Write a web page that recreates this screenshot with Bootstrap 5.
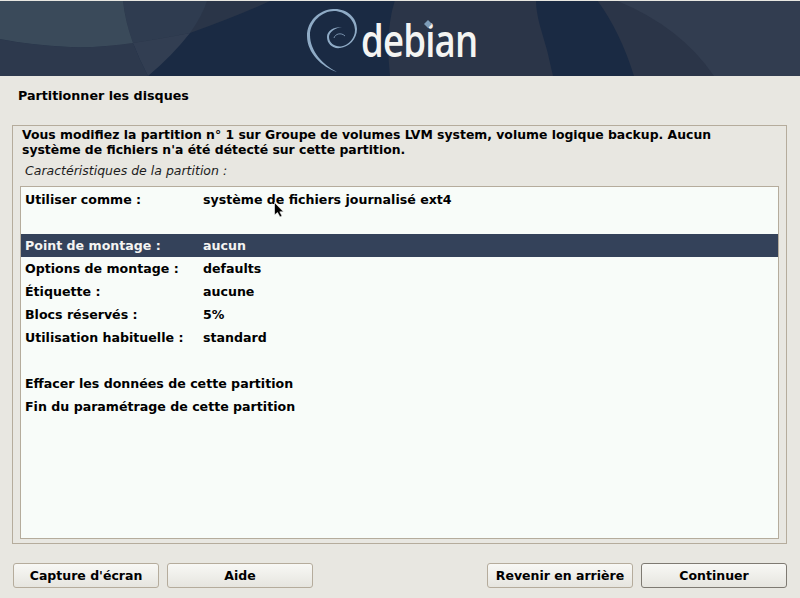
<!DOCTYPE html>
<html lang="fr"><head><meta charset="utf-8"><title>Partitionner les disques</title>
<link href="https://cdn.jsdelivr.net/npm/bootstrap@5.3.0/dist/css/bootstrap.min.css" rel="stylesheet">
<style>
html,body{height:100%}
body{margin:0;background:#e8e7e1;color:#000;font:bold 12.6px/15px "DejaVu Sans",sans-serif;overflow:hidden;width:800px;height:598px}
.di-head{height:75px;margin-top:1px;background:#1a2a43;position:relative;overflow:hidden}
.di-art{position:absolute;inset:0;width:800px;height:75px}
.di-word{position:absolute;left:361px;top:8px;color:#f4f4f2;font:600 46px/60px "Open Sans",sans-serif;letter-spacing:-1px;transform:scaleX(.795);transform-origin:0 0}
.di-dot{position:absolute;left:0;top:0;width:800px;height:75px}
.di-title{padding:12px 18px 0;height:49px;font-size:12.7px}
.di-frame{margin:0 13px 0 12px;height:419px;border:1px solid #b5ac9c;padding:1px 7px 0 9px;display:flex;flex-direction:column}
.di-msg{font-size:12.42px;line-height:15px;padding-right:40px}
.di-cap{font-weight:400;font-style:italic;font-size:12.5px;padding:6px 3px 0;height:26px;color:#1c1c1c}
.di-list{flex:1;margin:3px 0 4px -2px;background:#f8fcf9;border:1px solid #b5ac9c;padding:1px 0 0}
.di-row{height:23px;padding:4px 4px 0;display:flex;white-space:nowrap}
.di-row>span:first-child{width:178px}
.di-sel{background:#34425a;color:#f4f4f2}
.di-gap{height:23px}
.di-foot{padding:19px 13px 0 13px}
.di-btn{width:146px;height:25px;padding:0;font:bold 12.5px/23px "DejaVu Sans",sans-serif;color:#000;border:1px solid #b5ac9c;border-radius:3px;background:linear-gradient(#f8f8f5,#e6e5df)}
.di-btn-main{border-color:#7e7a72}
.di-cursor{position:absolute;left:274px;top:202px;width:11px;height:16px}
</style></head><body>
<header class="di-head">
<svg class="di-art" viewBox="0 0 800 75" aria-hidden="true">
<path d="M0 0H270Q240 14 190 32Q130 48 70 46Q30 44 0 38Z" fill="#2a3548"/>
<path d="M0 38Q30 44 70 46Q100 47 133 42Q140 60 148 75H0Z" fill="#2d394d"/>
<path d="M123 0H207Q202 15 190 32Q160 38 133 42Q125 20 123 0Z" fill="#2f3c50"/>
<path d="M0 0H123Q125 20 133 42Q100 47 70 46Q30 44 0 38Z" fill="#3a4a5a"/>
<path d="M133 42Q160 38 190 32Q172 55 148 75Q140 60 133 42Z" fill="#323e52"/>
<path d="M395 -1Q385 30 390 75H553Q548 50 540 25Q536 10 536 -1Z" fill="#2b3548"/>
<path d="M597 -1Q620 30 634 75H800V-1Z" fill="#2b3548"/>
<path d="M615 -1Q680 25 714 75H800V-1Z" fill="#323d50"/>
<path d="M337 71C322 66 307 52 307 35C307 20 319 9 333 8C346 7 357 16 357 28C357 38 349 46 340 47C333 48 327 43 327 36C327 30 333 26 342 26C335 27 329 31 329 36C329 42 335 46 341 45.500C349 44 355 37 355 29C355 19 345 10 334 10C322 10 310 21 310 34C310 50 323 64 337 71Z" fill="#8fabc6"/>
<path d="M345 35C341 31 335 33 334 37" fill="none" stroke="#8fabc6" stroke-width=".8"/>
</svg>
<div class="di-word">debian</div>
<svg class="di-dot" viewBox="0 0 800 75" aria-hidden="true"><path d="M428 19l4 4 -4 4 -4 -4Z" fill="#7d9cb8"/></svg>
</header>
<div class="di-title">Partitionner les disques</div>
<main class="di-frame">
<div class="di-msg">Vous modifiez la partition n° 1 sur Groupe de volumes LVM system, volume logique backup. Aucun système de fichiers n'a été détecté sur cette partition.</div>
<div class="di-cap">Caractéristiques de la partition :</div>
<div class="di-list">
<div class="di-row"><span>Utiliser comme :</span><span>système de fichiers journalisé ext4</span></div>
<div class="di-gap"></div>
<div class="di-row di-sel"><span>Point de montage :</span><span>aucun</span></div>
<div class="di-row"><span>Options de montage :</span><span>defaults</span></div>
<div class="di-row"><span>Étiquette :</span><span>aucune</span></div>
<div class="di-row"><span>Blocs réservés :</span><span>5%</span></div>
<div class="di-row"><span>Utilisation habituelle :</span><span>standard</span></div>
<div class="di-gap"></div>
<div class="di-row"><span>Effacer les données de cette partition</span></div>
<div class="di-row"><span>Fin du paramétrage de cette partition</span></div>
</div>
</main>
<footer class="di-foot d-flex">
<button class="btn di-btn me-2" type="button">Capture d'écran</button>
<button class="btn di-btn" type="button">Aide</button>
<button class="btn di-btn ms-auto me-2" type="button">Revenir en arrière</button>
<button class="btn di-btn di-btn-main" type="button">Continuer</button>
</footer>
<svg class="di-cursor" viewBox="0 0 11 16" aria-hidden="true"><path d="M0.500 0.500V13L3.500 10.500 6 15 8 14 5.800 9.800H9.500Z" fill="#000" stroke="#fff" stroke-width=".6"/></svg>
<script src="https://cdn.jsdelivr.net/npm/bootstrap@5.3.0/dist/js/bootstrap.bundle.min.js"></script>
</body></html>
